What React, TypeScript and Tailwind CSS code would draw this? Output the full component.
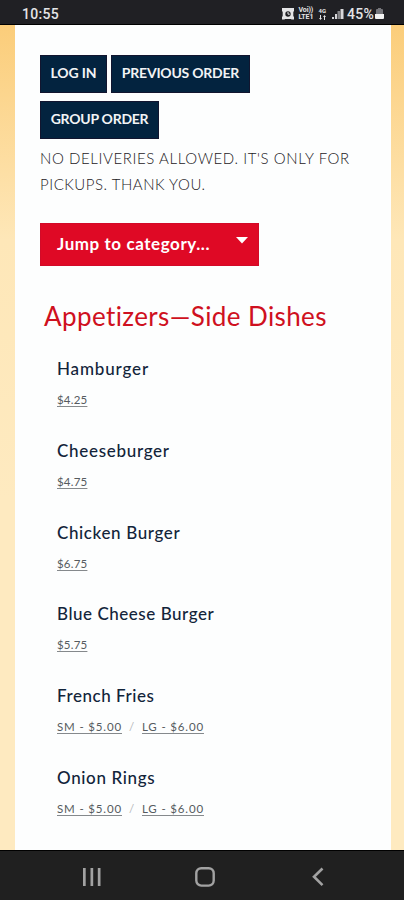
import React from "react";

type Option = { label: string; price: string };
type Item = { name: string; tracking: string; options: Option[] };

const items: Item[] = [
  { name: "Hamburger", tracking: "tracking-[0.85px]", options: [{ label: "", price: "$4.25" }] },
  { name: "Cheeseburger", tracking: "tracking-[0.7px]", options: [{ label: "", price: "$4.75" }] },
  { name: "Chicken Burger", tracking: "tracking-[0.62px]", options: [{ label: "", price: "$6.75" }] },
  { name: "Blue Cheese Burger", tracking: "tracking-[0.53px]", options: [{ label: "", price: "$5.75" }] },
  {
    name: "French Fries",
    tracking: "tracking-[0.55px]",
    options: [{ label: "SM - ", price: "$5.00" }, { label: "LG - ", price: "$6.00" }],
  },
  {
    name: "Onion Rings",
    tracking: "tracking-[0.65px]",
    options: [{ label: "SM - ", price: "$5.00" }, { label: "LG - ", price: "$6.00" }],
  },
];

function StatusBar() {
  return (
    <header className="flex h-[25px] shrink-0 items-center border-b border-black bg-[#202024] pl-[22px] pr-5 font-['Roboto',sans-serif] text-[#e4e4e6]">
      <span className="pt-[3px] text-[14px] font-medium leading-none tracking-[0.3px]">10:55</span>
      <div className="ml-auto flex items-center pt-[3px]">
        <svg width="12" height="12" viewBox="0 0 12 12" className="mr-[4px]">
          <path d="M0 0h12v3l-.7 1v4l.7 1v2.500H9.500L9 11H3l-.5.500H0V9l.7-1V4L0 3z" fill="#e4e4e6" />
          <circle cx="6" cy="6" r="2.7" fill="#202024" />
          <path d="M6 4v2.2h1.8" stroke="#e4e4e6" strokeWidth="1" fill="none" />
        </svg>
        <span className="mr-[4px] flex w-[16px] flex-col items-center text-[7px] font-bold leading-[7px] tracking-[-0.1px]">
          <span>Voi))</span>
          <span>LTE1</span>
        </span>
        <span className="mr-[5px] flex w-[9px] flex-col items-center text-[6px] font-bold leading-[7px]">
          <span>4G</span>
          <svg width="7" height="5" viewBox="0 0 7 5" className="my-px" fill="#e4e4e6">
            <path d="M1 0h1v3h1L1.500 5 0 3h1zM5 5h1V2h1L5.500 0 4 2h1z" />
          </svg>
        </span>
        <svg width="12" height="12" viewBox="0 0 12 12" className="mr-[3px]" fill="#d7d7da">
          <rect x="0" y="9" width="2" height="2" />
          <rect x="3" y="6" width="2" height="5" />
          <rect x="5.500" y="3" width="2.500" height="8" opacity=".55" />
          <rect x="8.500" y="1" width="3" height="10" />
        </svg>
        <span className="text-[14px] font-medium leading-none tracking-[0.3px]">45%</span>
        <svg width="9" height="12" viewBox="0 0 9 12" className="ml-px">
          <path d="M3 0h3v1h1q1 0 1 1v4H1V2q0-1 1-1h1z" fill="#75757a" />
          <path d="M0 6h9v4q0 1-1 1H1q-1 0-1-1z" fill="#f2f2f2" />
        </svg>
      </div>
    </header>
  );
}

function ActionButton({ children, className }: { children: React.ReactNode; className: string }) {
  return (
    <button
      className={`flex h-[38px] items-center justify-center whitespace-nowrap border border-[#12152f] bg-[#03233f] pb-[2px] text-[14px] font-bold leading-none text-[#f2f3f5] ${className}`}
    >
      {children}
    </button>
  );
}

function MenuItem({ item }: { item: Item }) {
  const sized = item.options.length > 1;
  return (
    <li className="h-[81.8px] pl-[17px]">
      <h3 className={`h-8 whitespace-nowrap text-[17px] font-medium leading-[26px] text-[#12243a] ${item.tracking}`}>
        {item.name}
      </h3>
      <p className={`flex h-6 text-[11.5px] leading-[24px] text-[#555b60] ${sized ? "tracking-[0.85px]" : "tracking-[0.2px]"}`}>
        {item.options.map((o, i) => (
          <React.Fragment key={o.label + o.price}>
            {i > 0 && <span className="w-[20px] text-center text-[#b5b8ba]">/</span>}
            <span className="whitespace-pre underline decoration-[#85898c] decoration-1 underline-offset-2">
              {o.label + o.price}
            </span>
          </React.Fragment>
        ))}
      </p>
    </li>
  );
}

function NavigationBar() {
  return (
    <nav className="flex h-[50px] shrink-0 items-center border-t border-black bg-[#202020] pl-[83px] pt-[3px]">
      <svg width="18" height="19" viewBox="0 0 18 19" fill="#a2a2a2">
        <rect x="0" y="0" width="2.7" height="18" />
        <rect x="7.500" y="0" width="2.7" height="18" />
        <rect x="14.800" y="0" width="2.7" height="18" />
      </svg>
      <svg width="20" height="20" viewBox="0 0 20 20" className="ml-[94px]" fill="none" stroke="#a2a2a2" strokeWidth="2.4">
        <rect x="1.3" y="1.2" width="17.4" height="17.4" rx="5" />
      </svg>
      <svg width="12" height="20" viewBox="0 0 12 20" className="ml-[97px]" fill="none" stroke="#a2a2a2" strokeWidth="2.6">
        <path d="M10.500 1.500 2 9.800l8.500 8.300" />
      </svg>
    </nav>
  );
}

export default function App() {
  return (
    <div className="flex h-[900px] w-[404px] flex-col overflow-hidden bg-[linear-gradient(180deg,#fbcd7a_25px,#fee7b8_240px,#feeac0_500px,#feeac0_100%)] font-['Lato',sans-serif] [font-variant-ligatures:none]">
      <StatusBar />
      <main className="ml-[15px] w-[376px] flex-1 overflow-hidden bg-[#fdfefe] pl-[25px] pt-[30px]">
        <div className="flex gap-1">
          <ActionButton className="w-[67px] tracking-[-0.1px]">LOG IN</ActionButton>
          <ActionButton className="w-[139px] tracking-[-0.22px]">PREVIOUS ORDER</ActionButton>
        </div>
        <ActionButton className="mt-2 w-[119px] tracking-[-0.25px]">GROUP ORDER</ActionButton>
        <p className="mt-[6px] whitespace-nowrap text-[15px] font-light leading-[26px] text-[#1c2024]">
          <span className="block tracking-[0.6px]">NO DELIVERIES ALLOWED. IT'S ONLY FOR</span>
          <span className="block tracking-[0.53px]">PICKUPS. THANK YOU.</span>
        </p>
        <button className="mt-[26px] flex h-[43px] w-[219px] border border-[#d20a28] bg-[#df0925] pl-4 text-[17px] font-bold leading-[40px] tracking-[0.57px] text-white">
          <span>Jump to category...</span>
          <svg width="12" height="7" viewBox="0 0 12 7" className="ml-auto mr-[10px] mt-[13px]">
            <path d="M0 0h12L6 6.500z" fill="#fff" />
          </svg>
        </button>
        <h2 className="mt-[33px] whitespace-nowrap pl-[4px] text-[26px] leading-[34px] tracking-[0.4px] text-[#cf1020]">
          Appetizers—Side Dishes
        </h2>
        <ul className="mt-[23px]">
          {items.map((item) => (
            <MenuItem key={item.name} item={item} />
          ))}
        </ul>
      </main>
      <NavigationBar />
    </div>
  );
}
